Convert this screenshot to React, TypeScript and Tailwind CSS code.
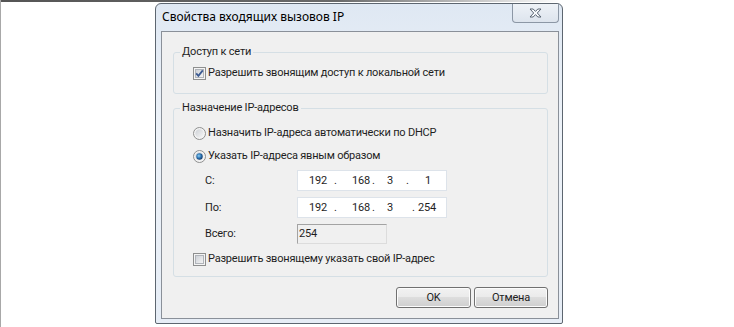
import React from "react";

const CheckBox: React.FC<{ checked?: boolean }> = ({ checked }) => (
  <svg width="13" height="13" viewBox="0 0 13 13" className="shrink-0">
    <defs>
      <linearGradient id={checked ? "cbg1" : "cbg0"} x1="0" y1="0" x2="1" y2="1">
        <stop offset="0" stopColor="#cbcfd5" />
        <stop offset="1" stopColor="#f6f6f6" />
      </linearGradient>
    </defs>
    <rect x="0.5" y="0.5" width="12" height="12" fill="#f4f4f4" stroke="#8e8f8f" />
    <rect x="2.5" y="2.5" width="8" height="8" fill={`url(#${checked ? "cbg1" : "cbg0"})`} stroke="#b0b4ba" />
    {checked && (
      <path d="M3.2 6.3 L5.4 8.8 L9.8 3.4" fill="none" stroke="#3b5a92" strokeWidth="1.8" />
    )}
  </svg>
);

const Radio: React.FC<{ checked?: boolean }> = ({ checked }) => (
  <svg width="13" height="13" viewBox="0 0 13 13" className="shrink-0">
    <defs>
      <linearGradient id="rbg" x1="0" y1="0" x2="1" y2="1">
        <stop offset="0" stopColor="#cdd1d6" />
        <stop offset="1" stopColor="#f7f7f7" />
      </linearGradient>
      <radialGradient id="rdot" cx="0.4" cy="0.4" r="0.6">
        <stop offset="0" stopColor="#8fd0f5" />
        <stop offset="0.6" stopColor="#2a71b0" />
        <stop offset="1" stopColor="#173f70" />
      </radialGradient>
    </defs>
    <circle cx="6.5" cy="6.5" r="6" fill="#f4f4f4" stroke="#8e8f8f" />
    <circle cx="6.5" cy="6.5" r="4.2" fill="url(#rbg)" />
    {checked && <circle cx="6.5" cy="6.5" r="3.2" fill="url(#rdot)" />}
  </svg>
);

const WinButton: React.FC<{ label: string; w: string }> = ({ label, w }) => (
  <button
    className={`${w} h-[21px] rounded-[3px] border border-[#707070] bg-[linear-gradient(#f2f2f2_0%,#ebebeb_45%,#dddddd_50%,#cfcfcf_100%)] text-[11px] text-[#1e1e1e] leading-none shadow-[inset_0_0_0_1px_#fcfcfc]`}
  >
    {label}
  </button>
);

export default function App() {
  return (
    <div className="w-[734px] h-[327px] bg-white border-l border-[#a8a8a8] overflow-hidden font-['Roboto',sans-serif] text-[#1e1e1e]">
      <div className="h-[2px] w-[560px] bg-[linear-gradient(to_right,#555555,#6a6a6a_60%,#ffffff)]" />
      <div className="ml-[154px] mt-[1px] w-[408px] h-[321px] rounded-t-[6px] rounded-b-[2px] border border-[#5d6670] bg-[linear-gradient(to_bottom,#dfe8f3,#eef3f9_40%,#e6edf6)] flex flex-col">
        {/* Title bar */}
        <div className="h-[27px] flex">
          <div className="pl-[6px] pt-[5px] font-['Noto_Sans',sans-serif] text-[12px] leading-[16px] text-black">
            Свойства входящих вызовов IP
          </div>
          <div className="ml-auto mr-[3px] w-[47px] h-[19px] rounded-b-[4px] border border-t-0 border-[#8c97a5] bg-[linear-gradient(#eef2f7,#dde4ed)] flex items-center justify-center">
            <svg width="13" height="10" viewBox="0 0 13 10">
              <path
                d="M1 1 H4.2 L6.5 3.4 L8.8 1 H12 L8.3 5 L12 9 H8.8 L6.5 6.6 L4.2 9 H1 L4.7 5 Z"
                fill="#f8fafc"
                stroke="#5b6675"
                strokeWidth="1"
                strokeLinejoin="round"
              />
            </svg>
          </div>
        </div>

        {/* Client area */}
        <div className="ml-[5px] w-[398px] h-[288px] border border-[#8a9099] bg-[#f0f0f0] text-[11px] leading-[16px] tracking-[-0.2px]">
          <fieldset className="ml-[11px] mt-[12px] w-[375px] h-[50px] border border-[#d5dfe5] rounded-[3px]">
            <legend className="ml-[6px] px-[2px]">Доступ к сети</legend>
            <div className="pl-[19px] pt-[5px] flex items-center gap-[2px]">
              <CheckBox checked />
              <span>Разрешить звонящим доступ к локальной сети</span>
            </div>
          </fieldset>

          <fieldset className="ml-[11px] mt-[6px] w-[375px] h-[177px] border border-[#d5dfe5] rounded-[3px]">
            <legend className="ml-[6px] px-[2px]">Назначение IP-адресов</legend>
            <div className="pl-[19px] pt-[9px] flex flex-col">
              <div className="flex items-center gap-[2px] h-[16px]">
                <Radio />
                <span>Назначить IP-адреса автоматически по DHCP</span>
              </div>
              <div className="mt-[7px] flex items-center gap-[2px] h-[16px]">
                <Radio checked />
                <span>Указать IP-адреса явным образом</span>
              </div>

              <div className="mt-[6px] flex items-center h-[21px]">
                <span className="pl-[12px] w-[104px]">С:</span>
                <div className="w-[150px] h-[21px] bg-white border border-[#dde3ea] flex items-center pl-[11px] whitespace-pre">
                  <span className="w-[25px]">192</span>
                  <span className="w-[18px]">.</span>
                  <span className="w-[20px]">168</span>
                  <span className="w-[15px]">.</span>
                  <span className="w-[19px]">3</span>
                  <span className="w-[19px]">.</span>
                  <span>1</span>
                </div>
              </div>

              <div className="mt-[6px] flex items-center h-[21px]">
                <span className="pl-[12px] w-[104px]">По:</span>
                <div className="w-[150px] h-[21px] bg-white border border-[#dde3ea] flex items-center pl-[11px] whitespace-pre">
                  <span className="w-[25px]">192</span>
                  <span className="w-[18px]">.</span>
                  <span className="w-[20px]">168</span>
                  <span className="w-[15px]">.</span>
                  <span className="w-[25px]">3</span>
                  <span className="w-[6px]">.</span>
                  <span>254</span>
                </div>
              </div>

              <div className="mt-[6px] flex items-center h-[20px]">
                <span className="pl-[12px] w-[104px]">Всего:</span>
                <div className="w-[90px] h-[20px] bg-[#f0f0f0] border border-[#a3a3a3] border-r-[#dcdcdc] border-b-[#dcdcdc] pl-[1px] flex items-center">
                  254
                </div>
              </div>

              <div className="mt-[7px] flex items-center gap-[2px] h-[16px]">
                <CheckBox />
                <span>Разрешить звонящему указать свой IP-адрес</span>
              </div>
            </div>
          </fieldset>

          <div className="ml-[11px] w-[375px] mt-[10px] flex justify-end gap-[3px]">
            <WinButton label="OK" w="w-[75px]" />
            <WinButton label="Отмена" w="w-[74px]" />
          </div>
        </div>
      </div>
    </div>
  );
}
